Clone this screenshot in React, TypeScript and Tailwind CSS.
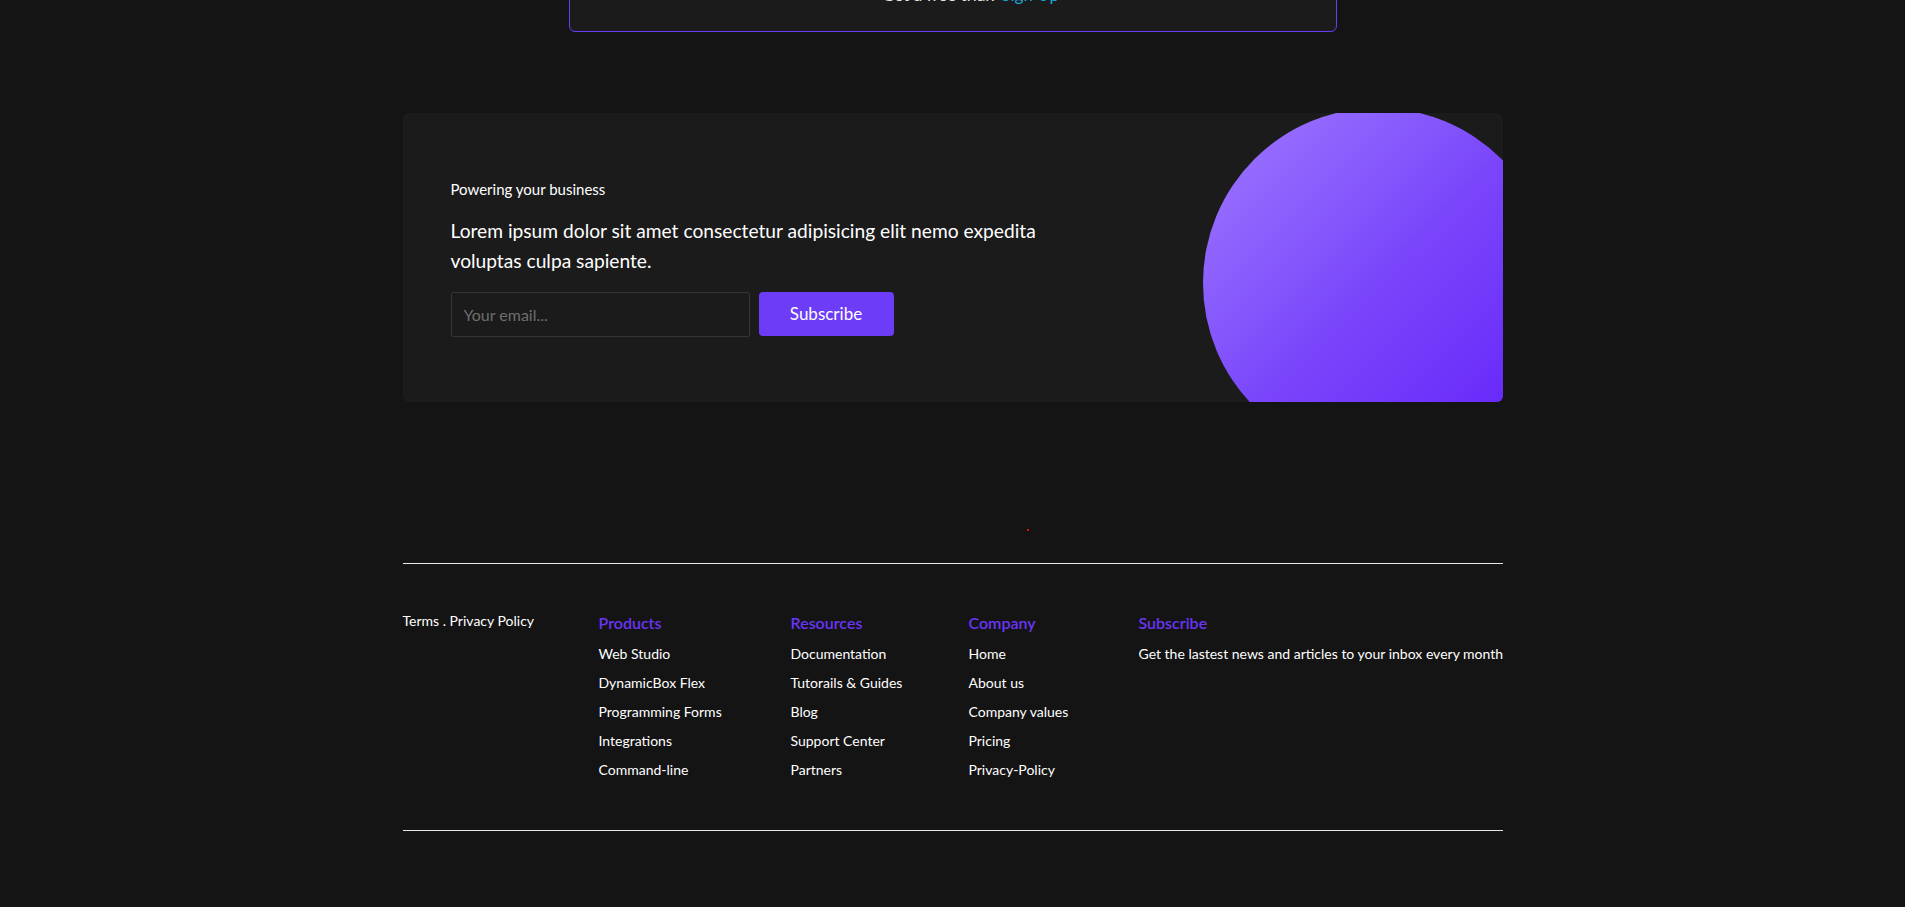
import React from "react";

const products = ["Web Studio", "DynamicBox Flex", "Programming Forms", "Integrations", "Command-line"];
const resources = ["Documentation", "Tutorails & Guides", "Blog", "Support Center", "Partners"];
const company = ["Home", "About us", "Company values", "Pricing", "Privacy-Policy"];

function Col({ title, items }: { title: string; items: string[] }) {
  return (
    <div className="flex flex-col">
      <h4 className="text-[16px] leading-[24px] font-semibold text-[#6a35f5]">{title}</h4>
      <ul className="mt-[9px] flex flex-col gap-[9px]">
        {items.map((i) => (
          <li key={i} className="text-[14px] leading-[20px] text-white">
            {i}
          </li>
        ))}
      </ul>
    </div>
  );
}

export default function App() {
  return (
    <div
      className="min-h-screen bg-[#141414] text-white overflow-hidden"
      style={{ fontFamily: "Lato, 'Noto Sans', sans-serif" }}
    >
      {/* top box (mostly off-screen) */}
      <div className="mx-auto w-[768px] -mt-[60px] h-[92px] rounded-md border border-[#6d3cf7] bg-[#1b1b1b] flex items-end justify-center pb-[24px]">
        <p className="text-[17px] leading-[24px] text-[#e5e5e5] translate-x-[18px]">
          Get a free trial? <span className="text-[#1ea7d6]">Sign Up</span>
        </p>
      </div>

      {/* CTA card */}
      <section className="mx-auto mt-[81px] w-[1100px]">
        <div className="relative h-[289px] overflow-hidden rounded-md bg-[#1b1b1b] pl-[48px] pt-[64px]">
          <div className="absolute left-[800px] top-[-5px] h-[350px] w-[350px] rounded-full bg-gradient-to-br from-[#a078ff] via-[#7a45fa] to-[#6216fa]" />
          <div className="relative w-[620px]">
            <p className="text-[15px] leading-[24px] text-white">Powering your business</p>
            <p className="mt-[15px] text-[19.2px] leading-[29.5px] text-white w-[600px]">
              Lorem ipsum dolor sit amet consectetur adipisicing elit nemo expedita voluptas culpa sapiente.
            </p>
            <div className="mt-[17px] flex gap-[9px]">
              <input
                placeholder="Your email..."
                className="h-[45px] w-[299px] rounded-[2px] border border-[#353535] bg-[#1b1b1b] px-[12px] text-[16px] text-white placeholder:text-[#6e6e6e] outline-none"
              />
              <button className="h-[44px] w-[135px] rounded-[4px] bg-[#6d3cf7] text-[17px] text-white">
                Subscribe
              </button>
            </div>
          </div>
        </div>
      </section>

      {/* red dot */}
      <div className="mx-auto w-[1100px] h-[161px] relative">
        <div className="absolute left-[624px] top-[127px] h-[2px] w-[2px] bg-[#e01010]" />
      </div>

      {/* footer */}
      <footer className="mx-auto w-[1100px] border-t border-b border-[#e8e8e8] pt-[47px] pb-[50px]">
        <div className="grid grid-cols-[196px_192px_178px_170px_1fr]">
          <div className="text-[14px] leading-[20px] text-white">Terms . Privacy Policy</div>
          <Col title="Products" items={products} />
          <Col title="Resources" items={resources} />
          <Col title="Company" items={company} />
          <div className="flex flex-col">
            <h4 className="text-[16px] leading-[24px] font-semibold text-[#6a35f5]">Subscribe</h4>
            <p className="mt-[9px] text-[14px] leading-[20px] text-white whitespace-nowrap">
              Get the lastest news and articles to your inbox every month
            </p>
          </div>
        </div>
      </footer>
      <div className="h-[80px]" />
    </div>
  );
}
